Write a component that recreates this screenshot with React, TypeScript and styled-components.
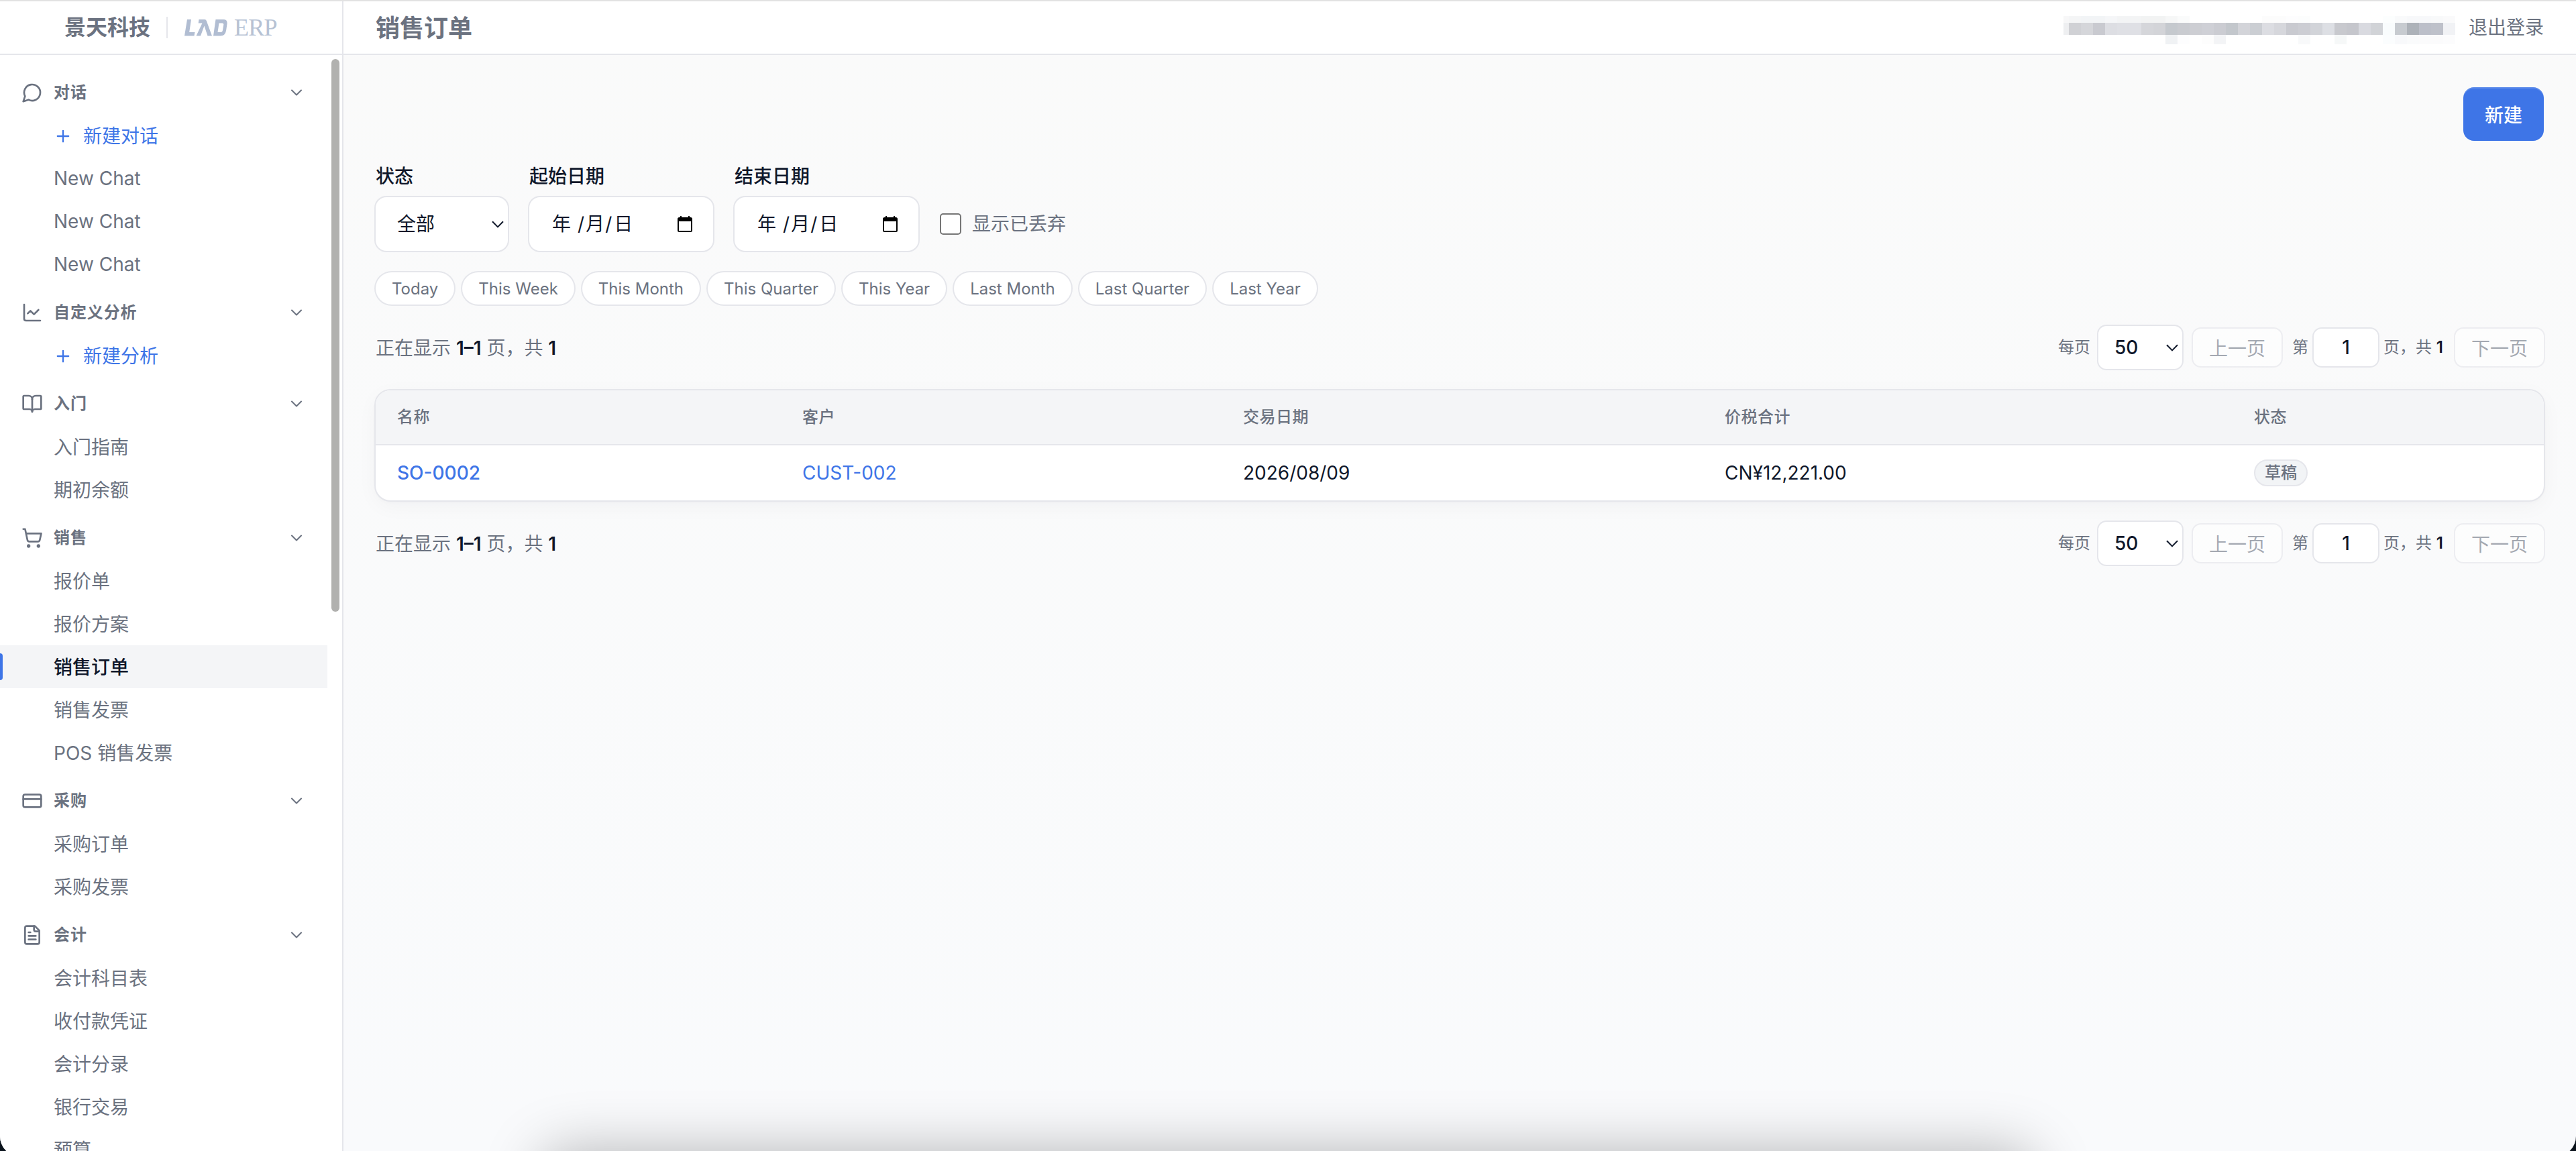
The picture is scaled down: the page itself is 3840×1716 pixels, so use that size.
import React from "react";
import styled, { createGlobalStyle, css } from "styled-components";

const c = {
  blue: "#3e75e7",
  ink: "#0f172a",
  muted: "#6b7280",
  line: "#e5e6eb",
  head: "#f4f5f7",
  white: "#ffffff",
};

const sans = `Inter, "Noto Sans CJK SC", sans-serif`;

const GlobalStyle = createGlobalStyle`
  *, *::before, *::after { box-sizing: border-box; }
  html, body { margin: 0; padding: 0; height: 1716px; overflow: hidden; background: #0b131c; }
  body { font-family: ${sans}; font-size: 28px; line-height: 40px; color: ${c.ink}; }
  button, input { font-family: inherit; font-size: inherit; margin: 0; }
  a { color: inherit; text-decoration: none; }
`;

const Screen = styled.div`
  position: relative;
  width: 3840px;
  height: 1716px;
  overflow: hidden;
`;

const Window = styled.div`
  display: flex;
  height: 1724px;
  border-top: 2px solid #e2e2e2;
  border-radius: 0 0 30px 30px;
  overflow: hidden;
  background: linear-gradient(#fafafa, #f9fafc);
`;

/* Sidebar */

const Sidebar = styled.aside`
  flex: none;
  width: 512px;
  display: flex;
  flex-direction: column;
  background: ${c.white};
  border-right: 2px solid ${c.line};
`;

const Brand = styled.div`
  flex: none;
  height: 80px;
  display: flex;
  align-items: center;
  padding-left: 96px;
  border-bottom: 2px solid ${c.line};
`;

const Company = styled.span`
  font-size: 32px;
  font-weight: 600;
  color: ${c.muted};
`;

const BrandRule = styled.span`
  width: 2px;
  height: 32px;
  margin: 0 25px 0 24px;
  background: ${c.line};
`;

const Product = styled.span`
  display: flex;
  align-items: center;
  gap: 10px;
  color: #b6c2d4;
`;

const ProductName = styled.span`
  font-family: "Liberation Serif", serif;
  font-size: 36px;
  line-height: 40px;
  letter-spacing: -0.8px;
`;

const SideBody = styled.div`
  flex: 1;
  min-height: 0;
  display: flex;
`;

const Nav = styled.nav`
  width: 488px;
  padding-top: 16px;
  overflow: hidden;
`;

const ScrollThumb = styled.div`
  flex: none;
  width: 12px;
  height: 824px;
  margin: 6px 0 0 6px;
  border-radius: 6px;
  background: #b1b1af;
`;

const SectionHead = styled.div`
  height: 64px;
  margin-top: 8px;
  padding: 0 32px;
  display: flex;
  align-items: center;
  gap: 16px;
  color: ${c.muted};
  font-size: 24px;
  font-weight: 600;
  letter-spacing: 0.9px;
`;

const SectionTitle = styled.span`
  flex: 1;
`;

const NavItem = styled.a<{ $active?: boolean; $accent?: boolean; $latin?: boolean }>`
  position: relative;
  height: 64px;
  padding: ${(p) => (p.$latin ? 0 : 2)}px 0 0 80px;
  display: flex;
  align-items: center;
  gap: 16px;
  color: ${(p) => (p.$accent ? c.blue : c.muted)};
  ${(p) =>
    p.$active &&
    css`
      color: ${c.ink};
      font-weight: 500;
      background: ${c.head};
      &::before {
        content: "";
        position: absolute;
        left: 0;
        top: 12px;
        width: 4px;
        height: 40px;
        border-radius: 0 4px 4px 0;
        background: ${c.blue};
      }
    `}
`;

const Glyph = styled.svg<{ $size: number; $weight?: number }>`
  flex: none;
  width: ${(p) => p.$size}px;
  height: ${(p) => p.$size}px;
  fill: none;
  stroke: currentColor;
  stroke-width: ${(p) => p.$weight ?? 2};
  stroke-linecap: round;
  stroke-linejoin: round;
`;

/* Main area */

const Main = styled.main`
  flex: 1;
  min-width: 0;
  display: flex;
  flex-direction: column;
`;

const TopBar = styled.header`
  flex: none;
  height: 80px;
  padding: 0 48px;
  display: flex;
  align-items: center;
  justify-content: space-between;
  background: ${c.white};
  border-bottom: 2px solid ${c.line};
`;

const PageTitle = styled.h1`
  margin: 0;
  padding-top: 1px;
  font-size: 36px;
  font-weight: 600;
  color: ${c.muted};
`;

const Account = styled.div`
  display: flex;
  align-items: center;
  gap: 20px;
  color: ${c.muted};
`;

const Mosaic = styled.div`
  display: flex;
  height: 42px;
  margin-top: 8px;
`;

const MosaicColumn = styled.div<{ $narrow?: boolean }>`
  width: ${(p) => (p.$narrow ? 8 : 18)}px;
  display: grid;
  grid-template-rows: 10px 18px 14px;
`;

const MosaicCell = styled.span<{ $tone?: string }>`
  background: ${(p) => p.$tone ?? "transparent"};
`;

const Content = styled.div`
  padding: 48px;
  display: flex;
  flex-direction: column;
  gap: 32px;
`;

const Actions = styled.div`
  display: flex;
  justify-content: flex-end;
`;

const PrimaryButton = styled.button`
  height: 80px;
  padding: 0 32px;
  border: 0;
  border-radius: 16px;
  background: ${c.blue};
  box-shadow: inset 0 2px 0 rgba(255, 255, 255, 0.16);
  color: ${c.white};
  font-weight: 500;
`;

const Filters = styled.div`
  display: flex;
  align-items: flex-end;
  gap: 32px;
`;

const Field = styled.label`
  display: flex;
  flex-direction: column;
  gap: 11px;
`;

const FieldLabel = styled.span`
  padding-top: 1px;
  font-weight: 500;
`;

const outline = css`
  background: ${c.white};
  box-shadow: 0 0 0 2px ${c.line};
`;

const SelectBox = styled.span<{ $width: number; $height: number; $pad: number }>`
  ${outline}
  width: ${(p) => p.$width}px;
  height: ${(p) => p.$height}px;
  padding: 0 6px 0 ${(p) => p.$pad}px;
  border-radius: ${(p) => (p.$height > 70 ? 16 : 12)}px;
  display: flex;
  align-items: center;
  justify-content: space-between;
  color: ${c.ink};
  font-size: 28px;
`;

const Medium = styled.span`
  font-weight: 500;
`;

const SelectArrow = styled.svg`
  width: 18px;
  height: 11px;
  fill: none;
  stroke: ${c.ink};
  stroke-width: 2;
`;

const DateBox = styled.span`
  ${outline}
  width: 274px;
  height: 80px;
  padding: 0 30px 0 34px;
  border-radius: 16px;
  display: flex;
  align-items: center;
  justify-content: space-between;
`;

const DateParts = styled.span`
  display: flex;
`;

const DateSlash = styled.span<{ $before: number; $after: number }>`
  margin: 0 ${(p) => p.$after}px 0 ${(p) => p.$before}px;
`;

const CalendarIcon = styled.svg`
  width: 24px;
  height: 26px;
`;

const Check = styled.label`
  height: 80px;
  display: flex;
  align-items: center;
  gap: 16px;
  color: ${c.muted};
`;

const CheckBox = styled.input`
  appearance: none;
  width: 32px;
  height: 32px;
  border: 2px solid #767676;
  border-radius: 5px;
  background: ${c.white};
`;

const Pills = styled.div`
  display: flex;
  gap: 12px;
`;

const Pill = styled.button`
  ${outline}
  height: 48px;
  padding: 0 24px;
  border: 0;
  border-radius: 24px;
  font-size: 24px;
  color: ${c.muted};
`;

const PagerRow = styled.div`
  height: 64px;
  display: flex;
  align-items: center;
  justify-content: space-between;
  color: ${c.muted};
`;

const Summary = styled.span`
  padding-top: 1px;
`;

const Strong = styled.span`
  font-weight: 600;
  color: ${c.ink};
`;

const PagerTools = styled.div`
  display: flex;
  align-items: center;
  gap: 16px;
  font-size: 24px;
`;

const PagerGroup = styled.span<{ $gap: number }>`
  display: flex;
  align-items: center;
  gap: ${(p) => p.$gap}px;
`;

const PageTotal = styled.span`
  padding-right: 2px;
`;

const PagerButton = styled.button`
  ${outline}
  height: 56px;
  padding: 0 24px;
  border: 0;
  border-radius: 12px;
  font-size: 28px;
  color: ${c.muted};
  opacity: 0.6;
`;

const PageInput = styled.input`
  ${outline}
  width: 96px;
  height: 56px;
  padding: 0;
  border: 0;
  border-radius: 12px;
  font-size: 28px;
  font-weight: 500;
  text-align: center;
  color: ${c.ink};
`;

const TableCard = styled.div`
  border-radius: 22px;
  background: ${c.white};
  box-shadow: 0 0 0 2px ${c.line}, 0 2px 6px rgba(15, 23, 42, 0.03), 0 8px 32px rgba(15, 23, 42, 0.04);
  overflow: hidden;
`;

const columns = "604px 657px 718px 789px 1fr";

const HeadRow = styled.div`
  display: grid;
  grid-template-columns: ${columns};
  align-items: center;
  height: 82px;
  background: ${c.head};
  border-bottom: 2px solid ${c.line};
  color: ${c.muted};
  font-size: 24px;
  font-weight: 500;
  letter-spacing: 0.48px;
`;

const BodyRow = styled.div`
  display: grid;
  grid-template-columns: ${columns};
  align-items: center;
  height: 82px;
`;

const Cell = styled.div`
  padding-left: 32px;
`;

const CellLink = styled.a<{ $strong?: boolean }>`
  color: ${c.blue};
  font-weight: ${(p) => (p.$strong ? 500 : 400)};
`;

const Badge = styled.span`
  display: flex;
  align-items: center;
  width: fit-content;
  height: 40px;
  padding: 0 14px;
  border: 2px solid ${c.line};
  border-radius: 20px;
  background: #f2f4f6;
  color: ${c.muted};
  font-size: 24px;
  font-weight: 500;
`;

/* Soft shade cast upward by the dock below the window */
const DockShade = styled.div`
  position: absolute;
  left: 806px;
  top: 1716px;
  width: 2228px;
  height: 200px;
  border-radius: 40px;
  box-shadow: 0 0 86px rgba(0, 0, 0, 0.28);
`;

const icons: Record<string, React.ReactNode> = {
  chat: <path d="M7.9 20A9 9 0 1 0 4 16.1L2 22Z" />,
  chart: (
    <>
      <path d="M3 3v16a2 2 0 0 0 2 2h16" />
      <path d="m19 9-5 5-4-4-3 3" />
    </>
  ),
  book: (
    <>
      <path d="M12 7v14" />
      <path d="M3 18a1 1 0 0 1-1-1V4a1 1 0 0 1 1-1h5a4 4 0 0 1 4 4 4 4 0 0 1 4-4h5a1 1 0 0 1 1 1v13a1 1 0 0 1-1 1h-6a3 3 0 0 0-3 3 3 3 0 0 0-3-3z" />
    </>
  ),
  cart: (
    <>
      <circle cx="8" cy="21" r="1" />
      <circle cx="19" cy="21" r="1" />
      <path d="M2.05 2.05h2l2.66 12.42a2 2 0 0 0 2 1.58h9.78a2 2 0 0 0 1.95-1.57l1.65-7.43H5.12" />
    </>
  ),
  card: (
    <>
      <rect width="20" height="14" x="2" y="5" rx="2" />
      <path d="M2 10h20" />
    </>
  ),
  file: (
    <>
      <path d="M15 2H6a2 2 0 0 0-2 2v16a2 2 0 0 0 2 2h12a2 2 0 0 0 2-2V7Z" />
      <path d="M14 2v4a2 2 0 0 0 2 2h4" />
      <path d="M10 9H8" />
      <path d="M16 13H8" />
      <path d="M16 17H8" />
    </>
  ),
  down: <path d="m6 9 6 6 6-6" />,
  plus: <path d="M5 12h14M12 5v14" />,
};

const Icon = ({ name, size, weight }: { name: string; size: number; weight?: number }) => (
  <Glyph viewBox="0 0 24 24" $size={size} $weight={weight}>
    {icons[name]}
  </Glyph>
);

const sections = [
  { icon: "chat", title: "对话", create: "新建对话", items: ["New Chat", "New Chat", "New Chat"] },
  { icon: "chart", title: "自定义分析", create: "新建分析", items: [] },
  { icon: "book", title: "入门", items: ["入门指南", "期初余额"] },
  { icon: "cart", title: "销售", items: ["报价单", "报价方案", "销售订单", "销售发票", "POS 销售发票"] },
  { icon: "card", title: "采购", items: ["采购订单", "采购发票"] },
  { icon: "file", title: "会计", items: ["会计科目表", "收付款凭证", "会计分录", "银行交易", "预算"] },
];

const ranges = [
  "Today",
  "This Week",
  "This Month",
  "This Quarter",
  "This Year",
  "Last Month",
  "Last Quarter",
  "Last Year",
];

/* Redacted user name: [upper, middle, lower] tones for each column */
const mosaic: [string?, string?, string?][] = [
  ["#f7f7f8", "#eeeff1"],
  ["#f4f5f6", "#d0d1d5"],
  ["#f2f4f6", "#d5d6da"],
  ["#f2f4f6", "#c9cad0"],
  ["#f5f6f8", "#dddee3"],
  ["#f3f4f5", "#dfe0e5"],
  ["#f3f4f5", "#dfe0e5"],
  ["#f2f3f3", "#d5d6da"],
  ["#f2f3f3", "#d3d4d8"],
  ["#f6f7f7", "#c5c9ce", "#f0f2f4"],
  ["#fafbfb", "#c9cbd0", "#fdfdfe"],
  [undefined, "#cdced3"],
  [undefined, "#cfd0d6", "#fdfdfd"],
  [undefined, "#cbccd2", "#f3f4f6"],
  [undefined, "#c3c7cc"],
  [undefined, "#d3d4d9"],
  [undefined, "#cbced3"],
  ["#fcfcfc", "#dcdde2"],
  ["#fcfcfc", "#d6d7dc"],
  ["#fdfdfe", "#c9cad0"],
  ["#fcfdfd", "#cccdd3", "#f8f9fa"],
  [undefined, "#d2d4d9"],
  [undefined, "#dddfe4"],
  [undefined, "#c8c9ce", "#f6f8f8"],
  [undefined, "#c5c6cc"],
  [undefined, "#d9dae0"],
  [undefined, "#d1d3d7"],
  ["#fcfefe", "#f9fcfd", "#fbfdfe"],
  ["#f9fafb", "#c7cbd0", "#f8f9fb"],
  ["#f7f8fa", "#adb2b9", "#fafbfc"],
  ["#f7f8fa", "#bcbfc9", "#fbfbfc"],
  ["#f8f9fa", "#bec1ca", "#fbfbfc"],
  ["#fafafb", "#f1f2f5", "#fcfcfd"],
];

const Arrow = () => (
  <SelectArrow viewBox="0 0 18 11">
    <path d="M1 1.2 9 9.4 17 1.2" />
  </SelectArrow>
);

const DateField = ({ label }: { label: string }) => (
  <Field>
    <FieldLabel>{label}</FieldLabel>
    <DateBox>
      <DateParts>
        <span>年</span>
        <DateSlash $before={10} $after={2}>/</DateSlash>
        <span>月</span>
        <DateSlash $before={1} $after={3}>/</DateSlash>
        <span>日</span>
      </DateParts>
      <CalendarIcon viewBox="0 0 24 26">
        <path
          fill="#000"
          fillRule="evenodd"
          d="M5 1h2v2h10V1h2v2h1.5A2.5 2.5 0 0 1 23 5.500V22.500A2.500 2.500 0 0 1 20.500 25H3.500A2.500 2.500 0 0 1 1 22.500V5.500A2.500 2.500 0 0 1 3.500 3H5ZM3 9V22.500a.5.500 0 0 0 .5.500H20.500a.5.500 0 0 0 .5-.5V9Z"
        />
      </CalendarIcon>
    </DateBox>
  </Field>
);

const Pager = () => (
  <PagerRow>
    <Summary>
      正在显示 <Strong>1–1</Strong> 页，共 <Strong>1</Strong>
    </Summary>
    <PagerTools>
      <PagerGroup $gap={12}>
        每页
        <SelectBox $width={125} $height={64} $pad={24}>
          <Medium>50</Medium>
          <Arrow />
        </SelectBox>
      </PagerGroup>
      <PagerButton>上一页</PagerButton>
      <PagerGroup $gap={8}>
        第
        <PageInput defaultValue="1" />
        <PageTotal>
          页，共 <Strong>1</Strong>
        </PageTotal>
      </PagerGroup>
      <PagerButton>下一页</PagerButton>
    </PagerTools>
  </PagerRow>
);

const ProductMark = () => (
  <svg width="64" height="25" viewBox="0 0 64 25" fill="#b1bdd2">
    <path d="M4 0h6L7.200 19h8.300l-1 5.500H0Z" />
    <path d="M21.500 0H30q2 0 2.800 2L41 24.500h-6.500L29.500 9.500 24 24.500h-6.500L26.500 5.500H20.700Z" />
    <path
      fillRule="evenodd"
      d="M46.500 0H58q6.500 0 5.500 7l-1.400 9.500q-1.300 8-8.500 8H43ZM51.500 5.500 49.500 19H54q2.600 0 3-3l1.300-8q.4-2.500-2-2.500Z"
    />
  </svg>
);

export default function App() {
  return (
    <Screen>
      <GlobalStyle />
      <Window>
        <Sidebar>
          <Brand>
            <Company>景天科技</Company>
            <BrandRule />
            <Product>
              <ProductMark />
              <ProductName>ERP</ProductName>
            </Product>
          </Brand>
          <SideBody>
            <Nav>
              {sections.map((s) => (
                <section key={s.title}>
                  <SectionHead>
                    <Icon name={s.icon} size={32} />
                    <SectionTitle>{s.title}</SectionTitle>
                    <Icon name="down" size={28} weight={1.75} />
                  </SectionHead>
                  {s.create && (
                    <NavItem $accent>
                      <Icon name="plus" size={28} />
                      {s.create}
                    </NavItem>
                  )}
                  {s.items.map((item, i) => (
                    <NavItem key={i} $active={item === "销售订单"} $latin={item === "New Chat"}>
                      {item}
                    </NavItem>
                  ))}
                </section>
              ))}
            </Nav>
            <ScrollThumb />
          </SideBody>
        </Sidebar>
        <Main>
          <TopBar>
            <PageTitle>销售订单</PageTitle>
            <Account>
              <Mosaic>
                {mosaic.map((tones, i) => (
                  <MosaicColumn key={i} $narrow={i === 0}>
                    <MosaicCell $tone={tones[0]} />
                    <MosaicCell $tone={tones[1]} />
                    <MosaicCell $tone={tones[2]} />
                  </MosaicColumn>
                ))}
              </Mosaic>
              <a>退出登录</a>
            </Account>
          </TopBar>
          <Content>
            <Actions>
              <PrimaryButton>新建</PrimaryButton>
            </Actions>
            <Filters>
              <Field>
                <FieldLabel>状态</FieldLabel>
                <SelectBox $width={197} $height={80} $pad={32}>
                  全部
                  <Arrow />
                </SelectBox>
              </Field>
              <DateField label="起始日期" />
              <DateField label="结束日期" />
              <Check>
                <CheckBox type="checkbox" />
                显示已丢弃
              </Check>
            </Filters>
            <Pills>
              {ranges.map((r) => (
                <Pill key={r}>{r}</Pill>
              ))}
            </Pills>
            <Pager />
            <TableCard>
              <HeadRow>
                <Cell>名称</Cell>
                <Cell>客户</Cell>
                <Cell>交易日期</Cell>
                <Cell>价税合计</Cell>
                <Cell>状态</Cell>
              </HeadRow>
              <BodyRow>
                <Cell>
                  <CellLink $strong>SO-0002</CellLink>
                </Cell>
                <Cell>
                  <CellLink>CUST-002</CellLink>
                </Cell>
                <Cell>2026/08/09</Cell>
                <Cell>CN¥12,221.00</Cell>
                <Cell>
                  <Badge>草稿</Badge>
                </Cell>
              </BodyRow>
            </TableCard>
            <Pager />
          </Content>
        </Main>
      </Window>
      <DockShade />
    </Screen>
  );
}
